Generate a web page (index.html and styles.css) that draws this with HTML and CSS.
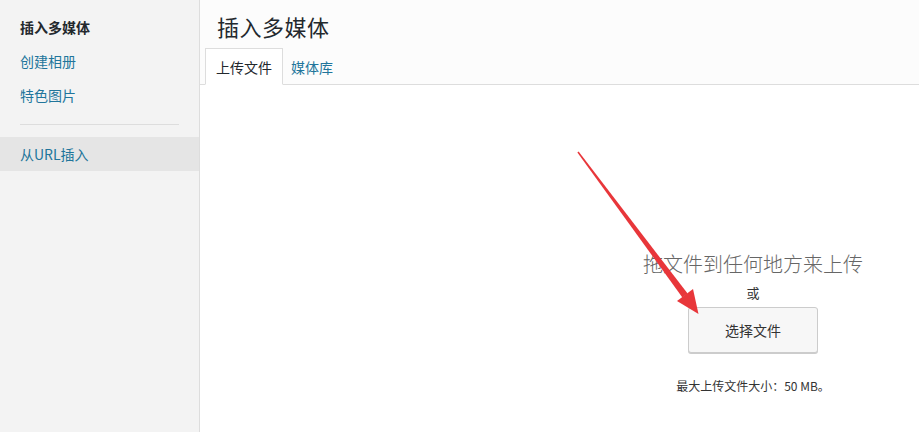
FILE: index.html
```html
<!DOCTYPE html>
<html lang="zh-CN">
<head>
<meta charset="utf-8">
<title>插入多媒体</title>
<link rel="stylesheet" href="styles.css">
</head>
<body>
<div class="frame">
  <aside class="sidebar">
    <div class="menu-item menu-title">插入多媒体</div>
    <a class="menu-item" href="#">创建相册</a>
    <a class="menu-item" href="#">特色图片</a>
    <div class="separator"></div>
    <a class="menu-item menu-active" href="#">从URL插入</a>
  </aside>
  <main class="main">
    <header class="header">
      <h1 class="title">插入多媒体</h1>
      <nav class="tabs">
        <span class="tab tab-active">上传文件</span>
        <a class="tab" href="#">媒体库</a>
      </nav>
    </header>
    <section class="content">
      <div class="uploader">
        <p class="drop-text">拖文件到任何地方来上传</p>
        <p class="or-text">或</p>
        <button class="select-btn" type="button">选择文件</button>
        <p class="max-size">最大上传文件大小：50 MB。</p>
      </div>
    </section>
  </main>
</div>
<svg class="annotation" width="919" height="432" viewBox="0 0 919 432" aria-hidden="true">
  <polygon points="577.4,152.4 578.6,151.6 687.6,293.6 682.4,297.4" fill="#e8363a"/>
  <polygon points="698.5,314 693,289 677,301" fill="#e8363a"/>
</svg>
</body>
</html>
```
FILE: styles.css
```css
* { box-sizing: border-box; }
html, body {
  margin: 0;
  padding: 0;
  width: 919px;
  height: 432px;
  overflow: hidden;
  background: #fff;
  font-family: "Noto Sans CJK SC", "Noto Sans", sans-serif;
  color: #23282d;
}
.frame {
  position: relative;
  display: flex;
  height: 432px;
}
.sidebar {
  flex: 0 0 200px;
  background: #f3f3f3;
  border-right: 1px solid #dddddd;
  padding-top: 10px;
  display: flex;
  flex-direction: column;
}
.menu-item {
  display: block;
  padding: 7px 20px;
  font-size: 14px;
  line-height: 20px;
  color: #21759b;
  text-decoration: none;
}
.menu-title {
  color: #23282d;
  font-weight: 700;
}
.separator {
  margin: 12px 20px;
  height: 1px;
  background: #dddddd;
}
.menu-active {
  background: #e5e5e5;
}
.main {
  flex: 1;
  min-width: 0;
  overflow: hidden;
  display: flex;
  flex-direction: column;
}
.header {
  background: #fcfcfc;
  padding-top: 11px;
}
.title {
  margin: 0 0 0 17px;
  font-size: 22px;
  line-height: 30px;
  font-weight: 400;
  color: #23282d;
  letter-spacing: 0.5px;
}
.tabs {
  margin-top: 7px;
  padding-left: 5px;
  display: flex;
  height: 37px;
  border-bottom: 1px solid #dddddd;
}
.tab {
  display: block;
  padding: 8px 7px 7px;
  font-size: 14px;
  line-height: 20px;
  color: #21759b;
  text-decoration: none;
  border: 1px solid transparent;
  margin-bottom: -1px;
}
.tab-active {
  padding: 8px 10px 7px;
  color: #23282d;
  background: #fff;
  border-color: #dddddd;
  border-bottom-color: #fff;
}
.content {
  flex: 1;
  background: #fff;
}
.uploader {
  width: 1106px;
  display: flex;
  flex-direction: column;
  align-items: center;
  text-align: center;
}
.drop-text {
  margin: 165px 0 0;
  font-size: 20px;
  line-height: 28px;
  color: #666;
  font-family: "Noto Sans CJK SC", serif;
  font-weight: 300;
}
.or-text {
  margin: 6px 0 0;
  font-size: 13px;
  line-height: 18px;
  color: #333;
}
.select-btn {
  margin-top: 5px;
  width: 130px;
  height: 46px;
  padding: 0;
  font-family: "Noto Sans CJK SC", sans-serif;
  font-size: 14px;
  line-height: 44px;
  color: #333;
  background: #f7f7f7;
  border: 1px solid #cccccc;
  border-radius: 3px;
  box-shadow: 0 1px 0 #cccccc;
}
.max-size {
  margin: 25px 0 0;
  font-size: 12px;
  line-height: 16px;
  color: #333;
}
.annotation {
  position: absolute;
  top: 0;
  left: 0;
  pointer-events: none;
}
```
